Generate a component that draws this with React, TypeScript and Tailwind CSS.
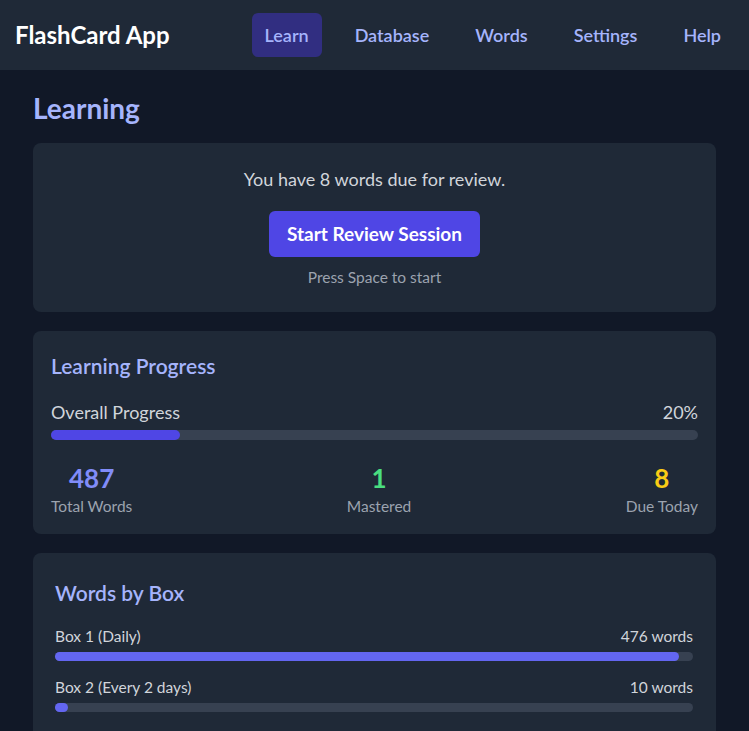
import React from 'react';

const nav = ['Learn', 'Database', 'Words', 'Settings', 'Help'];

const boxes = [
  { label: 'Box 1 (Daily)', count: 476 },
  { label: 'Box 2 (Every 2 days)', count: 10 },
  { label: 'Box 3 (Every 4 days)', count: 0 },
  { label: 'Box 4 (Weekly)', count: 0 },
];

export default function App() {
  const total = 487;

  return (
    <div className="min-h-screen bg-[#111827] font-['Lato',sans-serif]">
      {/* Header */}
      <header className="h-[70px] bg-[#1f2937] flex items-center justify-between pl-[15px] pr-[15px]">
        <h1 className="text-[24px] font-bold text-white">FlashCard App</h1>
        <nav className="flex items-center gap-[20px]">
          {nav.map((item, i) => (
            <button
              key={item}
              className={`h-[44px] px-[13px] rounded-md text-[18px] font-semibold text-[#a5b4fc] ${i === 0 ? 'bg-[#312e81]' : ''}`}
            >
              {item}
            </button>
          ))}
        </nav>
      </header>

      <main className="px-[33px] pt-[22px] pb-8">
        <h2 className="text-[28px] font-bold text-[#a5b4fc] leading-[32px] mb-[19px]">Learning</h2>

        {/* Review card */}
        <div className="bg-[#1f2937] rounded-lg flex flex-col items-center pt-[24px] pb-[25px]">
          <p className="text-[18px] text-[#d1d5db] leading-[24px]">You have 8 words due for review.</p>
          <button className="mt-[20px] h-[46px] w-[211px] rounded-md bg-[#4f46e5] text-white text-[19px] font-bold">
            Start Review Session
          </button>
          <p className="mt-[10px] text-[15.5px] text-[#9ca3af] leading-[20px]">Press Space to start</p>
        </div>

        {/* Progress card */}
        <div className="mt-[19px] bg-[#1f2937] rounded-lg px-[18px] pt-[22px] pb-[18px]">
          <h3 className="text-[21px] font-semibold text-[#a5b4fc] leading-[26px]">Learning Progress</h3>
          <div className="mt-[22px] flex justify-between text-[18px] text-[#d1d5db] leading-[22px]">
            <span>Overall Progress</span>
            <span>20%</span>
          </div>
          <div className="mt-[7px] h-[10px] rounded-full bg-[#374151]">
            <div className="h-full rounded-full bg-[#4f46e5] w-[20%]" />
          </div>
          <div className="mt-[23px] flex justify-between">
            <div className="flex flex-col items-center">
              <span className="text-[26px] font-bold text-[#818cf8] leading-[30px]">487</span>
              <span className="text-[15.5px] text-[#9ca3af] leading-[20px] mt-[3px]">Total Words</span>
            </div>
            <div className="flex flex-col items-center">
              <span className="text-[26px] font-bold text-[#4ade80] leading-[30px]">1</span>
              <span className="text-[15.5px] text-[#9ca3af] leading-[20px] mt-[3px]">Mastered</span>
            </div>
            <div className="flex flex-col items-center">
              <span className="text-[26px] font-bold text-[#facc15] leading-[30px]">8</span>
              <span className="text-[15.5px] text-[#9ca3af] leading-[20px] mt-[3px]">Due Today</span>
            </div>
          </div>
        </div>

        {/* Words by box */}
        <div className="mt-[19px] bg-[#1f2937] rounded-lg pl-[22px] pr-[23px] pt-[27px] pb-6">
          <h3 className="text-[21px] font-semibold text-[#a5b4fc] leading-[26px]">Words by Box</h3>
          <div className="mt-[20px] flex flex-col gap-[16px]">
            {boxes.map((b) => (
              <div key={b.label}>
                <div className="flex justify-between text-[15.5px] text-[#d1d5db] leading-[20px]">
                  <span>{b.label}</span>
                  <span>{b.count} words</span>
                </div>
                <div className="mt-[6px] h-[9px] rounded-full bg-[#374151]">
                  <div
                    className="h-full rounded-full bg-[#6366f1]"
                    style={{ width: `${(b.count / total) * 100}%`, minWidth: b.count > 0 ? 9 : 0 }}
                  />
                </div>
              </div>
            ))}
          </div>
        </div>
      </main>
    </div>
  );
}
